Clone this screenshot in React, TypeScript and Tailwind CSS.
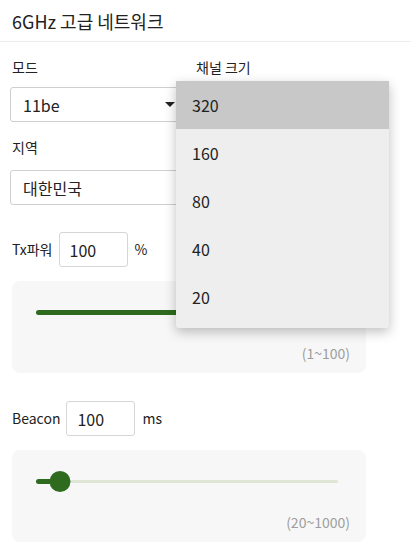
import React from 'react';

const font = { fontFamily: '"Noto Sans CJK KR", "Noto Sans", sans-serif' };

const channelOptions = ['320', '160', '80', '40', '20'];

const SelectBox: React.FC<{ value: string; arrow?: boolean }> = ({ value, arrow }) => (
  <div className="h-[35px] w-[176px] rounded-[3px] border border-[#cfcfcf] bg-white flex items-center justify-between pl-3 pr-[10px]">
    <span className="text-[16px] text-[#222]">{value}</span>
    {arrow && (
      <svg width="10" height="6" viewBox="0 0 10 6">
        <path d="M0 0 L10 0 L5 5 Z" fill="#222" />
      </svg>
    )}
  </div>
);

const SliderCard: React.FC<{ pct: number; range: string; thumb?: boolean }> = ({ pct, range, thumb }) => (
  <div className="w-[354px] h-[92px] rounded-lg bg-[#f7f7f7] px-6 pt-[26px] pb-[9px] flex flex-col">
    <div className="relative h-[10px] w-[302px] flex items-center">
      <div className="h-[3px] w-full rounded-full bg-[#dfe6d5]" />
      <div
        className="absolute left-0 h-[5px] rounded-full bg-[#2f6b1f]"
        style={{ width: `${pct}%` }}
      />
      {thumb && (
        <div
          className="absolute w-[21px] h-[21px] rounded-full bg-[#2f6b1f] -translate-x-1/2"
          style={{ left: `${pct}%` }}
        />
      )}
    </div>
    <div className="mt-auto self-end text-[14px] text-[#9e9e9e] mr-[-8px]">{range}</div>
  </div>
);

const App: React.FC = () => {
  return (
    <div className="relative w-[411px] h-[553px] bg-white text-[#222] overflow-hidden" style={font}>
      {/* Header */}
      <header className="h-[42px] border-b border-[#ececec] px-3 flex items-center">
        <h1 className="text-[18px] leading-none">6GHz 고급 네트워크</h1>
      </header>

      <main className="px-[10px]">
        <div className="flex gap-[10px]">
          <div className="flex flex-col">
            <label className="text-[14px] pl-[2px] mt-[16px] mb-[11px] leading-[18px]">모드</label>
            <SelectBox value="11be" arrow />
          </div>
          <div className="flex flex-col">
            <label className="text-[14px] mt-[16px] mb-[11px] leading-[18px]">채널 크기</label>
          </div>
        </div>

        <label className="block text-[14px] pl-[2px] mt-[16px] mb-[14px] leading-[18px]">지역</label>
        <SelectBox value="대한민국" />

        <div className="flex items-center mt-[27px] pl-[2px]">
          <span className="text-[14px]">Tx파워</span>
          <div className="ml-[6px] w-[69px] h-[35px] rounded-[3px] border border-[#d6d6d6] flex items-center pl-[10px] text-[16px]">100</div>
          <span className="ml-[7px] text-[14px]">%</span>
        </div>
        <div className="mt-[14px] pl-[2px]">
          <SliderCard pct={100} range="(1~100)" />
        </div>

        <div className="flex items-center mt-[28px] pl-[2px]">
          <span className="text-[14px]">Beacon</span>
          <div className="ml-[6px] w-[69px] h-[35px] rounded-[3px] border border-[#d6d6d6] flex items-center pl-[10px] text-[16px]">100</div>
          <span className="ml-[7px] text-[14px]">ms</span>
        </div>
        <div className="mt-[14px] pl-[2px]">
          <SliderCard pct={8} range="(20~1000)" thumb />
        </div>
      </main>

      {/* Dropdown menu */}
      <ul className="absolute left-[176px] top-[81px] w-[213px] bg-[#eeeeee] rounded-b-[3px] shadow-[0_4px_12px_rgba(0,0,0,0.25)]">
        {channelOptions.map((opt, i) => (
          <li
            key={opt}
            className={`h-[48px] flex items-center pl-[16px] text-[16px] ${i === 0 ? 'bg-[#c8c8c8]' : ''} ${i === channelOptions.length - 1 ? 'h-[55px] pb-[7px]' : ''}`}
          >
            {opt}
          </li>
        ))}
      </ul>
    </div>
  );
};

export default App;
